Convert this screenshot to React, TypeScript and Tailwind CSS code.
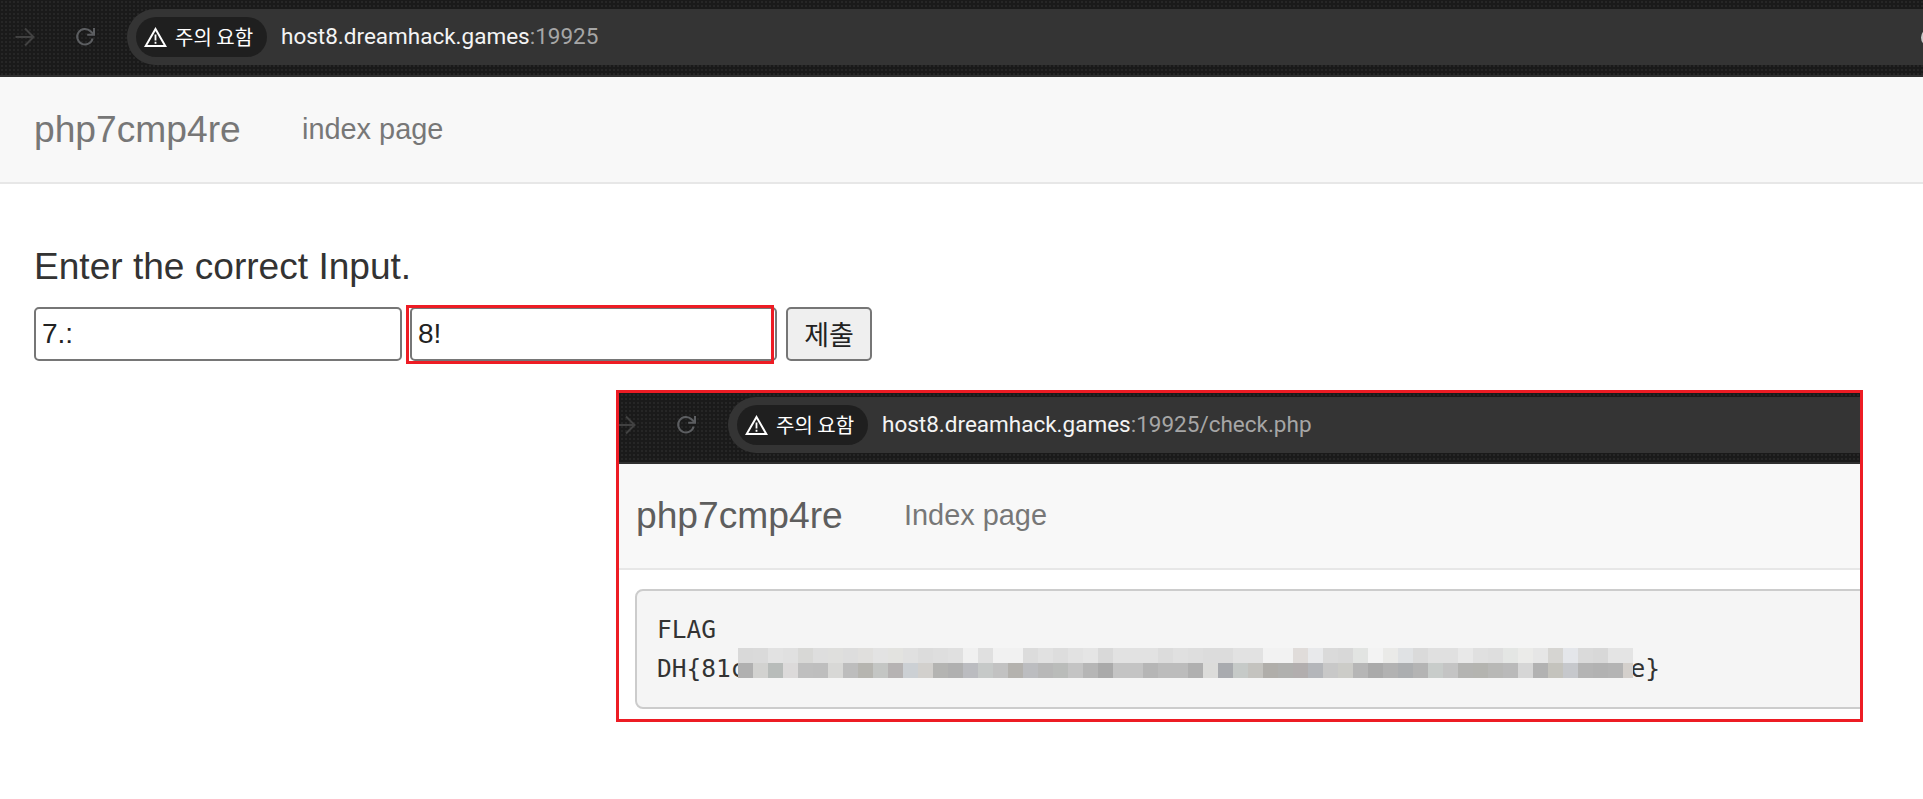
import type { ReactNode } from "react";

const MOSAIC_TOP = [
  "#d9d9d9", "#dadada", "#e2e2e2", "#e0e0e0", "#d8d8d6", "#dedede", "#dfdfdd", "#dddddd", "#e0dfdd", "#e3e3e3",
  "#e3e3e0", "#e0e0e0", "#dcdcdc", "#dedede", "#e0e0e0", "#f0f0f0", "#e0e0e0", "#f1f1f1", "#f1f1f1", "#dcdcdc",
  "#e1e1e1", "#dddddd", "#e2e2e2", "#e5e5e5", "#d9d9d9", "#e2e2e2", "#e2e2e2", "#e2e2e2", "#dcdcdc", "#e0e0e0",
  "#dedede", "#dcdcdc", "#dcdcdc", "#e2e2e2", "#e2e2e2", "#f2f2f2", "#f2f2f2", "#e0dcda", "#e8e9eb", "#dadada",
  "#d8d8d8", "#e2e4e2", "#f3f3f3", "#eaeae8", "#e0e2e4", "#dadada", "#e0e0e0", "#e0e0e0", "#e8e8e8", "#e0e0e0",
  "#dedede", "#e4e6e4", "#ebebe9", "#e6e6e6", "#d6d5d2", "#e4e6ea", "#dadada", "#d8d8d8", "#e4e4e4", "#e4e4e4",
];

const MOSAIC_BOTTOM = [
  "#b0b0b0", "#d2d2d0", "#b8bcba", "#dcdada", "#bfbfbf", "#bebebe", "#d8d8d6", "#bdbdbd", "#b6b5b0", "#c4c6c4",
  "#b6b3b3", "#ccd0d4", "#d2d0cd", "#b4b4b2", "#b0b0b0", "#bbbcc0", "#c6c9c8", "#c2c2c2", "#b4b2ae", "#bcbdc0",
  "#b8b8b8", "#babcba", "#c4c4c4", "#b6b6b6", "#aaaaaa", "#c4c4c4", "#c4c4c4", "#b6b6b6", "#bcbcbc", "#bcbcbc",
  "#b0b0b0", "#dcdcda", "#a9abaf", "#c6cac8", "#c4c3bf", "#b0aeaa", "#b0b0ae", "#b2aeae", "#b4b6ba", "#c8c8c8",
  "#ccccc8", "#b6b6b6", "#aaaaaa", "#b2b2b2", "#acaeb0", "#b4b4b4", "#c8ccca", "#c4c4c4", "#b4b4b2", "#b4b4b0",
  "#b8b8b6", "#bababa", "#d6d6d6", "#b2b2b2", "#c4c3bd", "#c6c8cc", "#b4b4b4", "#b2b2b2", "#b4b4b4", "#d4d0cc",
];

function BackArrow() {
  return (
    <svg viewBox="0 0 20 20" className="h-5 w-5 shrink-0 fill-none stroke-[#414141] stroke-2">
      <path d="M0.5 10H18.5M10 1.5l8.5 8.5-8.5 8.5" />
    </svg>
  );
}

function ReloadIcon() {
  return (
    <svg viewBox="0 0 20 20" className="h-5 w-5 shrink-0 fill-none stroke-[#5c5e61] stroke-2">
      <path d="M17.6 11.5A7.8 7.8 0 1 1 15.6 4.3L18.6 7.2" />
      <path d="M19 1v6.8h-6.8" />
    </svg>
  );
}

function WarningIcon() {
  return (
    <svg viewBox="0 0 23 20" className="h-5 w-[23px] shrink-0 fill-none stroke-white stroke-2">
      <path d="M11.5 2 21.3 19H1.7Z" strokeLinejoin="miter" />
      <path d="M11.5 7.5v6M11.5 14.8v2" strokeWidth="1.8" />
    </svg>
  );
}

function BrowserBar({ path, className }: { path?: string; className: string }) {
  return (
    <div
      className={`border-b-2 border-[#2f2f2f] bg-[#1a1a1a] bg-[radial-gradient(#262626_1px,transparent_1px)] bg-[length:4px_4px] ${className}`}
    >
      <div className="flex h-14 items-center gap-10">
        <BackArrow />
        <ReloadIcon />
        <div className="-ml-2 flex h-14 flex-1 items-center rounded-l-full bg-[#343434] pl-[9px]">
          <div className="flex h-10 w-[131px] items-center gap-[8px] rounded-full bg-[#1f1f1f] pl-[8px] font-['Noto_Sans_CJK_KR',sans-serif] text-[20px] text-white">
            <WarningIcon />
            <span className="-mt-px whitespace-nowrap">주의 요함</span>
          </div>
          <div className="-mt-px ml-[14px] whitespace-nowrap font-['Roboto',sans-serif] text-[22.5px] text-[#f4f4f4]">
            host8.dreamhack.games<span className="text-[#a6a6a6]">:19925{path}</span>
          </div>
        </div>
      </div>
    </div>
  );
}

function Navbar({ brandClass, label, pad }: { brandClass: string; label: string; pad: string }) {
  return (
    <div className={`flex items-center border-b-2 border-[#e7e7e7] bg-[#f8f8f8] ${pad}`}>
      <span className={`w-[268px] text-[37.2px] ${brandClass}`}>php7cmp4re</span>
      <span className="text-[28.9px] text-[#777777]">{label}</span>
    </div>
  );
}

function RedBox({ className, children }: { className: string; children?: ReactNode }) {
  return <div className={`absolute border-[#ed1c24] ${className}`}>{children}</div>;
}

function FlagPanel() {
  return (
    <RedBox className="left-[616px] top-[390px] h-[332px] w-[1247px] overflow-hidden border-[3px] bg-white">
      <BrowserBar path="/check.php" className="-ml-[3px] h-[71px] pt-[4px]" />
      <Navbar brandClass="text-[#5e5e5e]" label="Index page" pad="h-[106px] pl-[17px]" />
      <div className="pl-[16px] pt-[19px]">
        <div className="w-[1400px] rounded-[8px] border-2 border-[#cccccc] bg-[#f5f5f5] px-[20px] py-[19px] font-['DejaVu_Sans_Mono',monospace] text-[24.5px] leading-[39px] text-[#333333]">
          <div>FLAG</div>
          <div className="relative whitespace-pre">
            DH{"{"}81c{"x".repeat(60)}e{"}"}
            <div className="absolute left-[81px] top-[-1px] w-[895px] overflow-hidden">
              <div className="flex w-[900px]">
                {MOSAIC_TOP.map((color, i) => (
                  <div key={i} className="h-[15px] w-[15px]" style={{ backgroundColor: color }} />
                ))}
              </div>
              <div className="flex w-[900px]">
                {MOSAIC_BOTTOM.map((color, i) => (
                  <div key={i} className="h-[15px] w-[15px]" style={{ backgroundColor: color }} />
                ))}
              </div>
            </div>
          </div>
        </div>
      </div>
    </RedBox>
  );
}

export default function App() {
  return (
    <div className="relative h-[799px] overflow-hidden bg-white font-['Liberation_Sans',Arial,sans-serif] text-[#333333]">
      <BrowserBar className="h-[77px] pl-[15px] pt-[9px]" />
      <div className="absolute left-[1921px] top-[28px] h-[19px] w-[19px] rounded-full border-2 border-[#c7c7c7]" />
      <Navbar brandClass="text-[#777777]" label="index page" pad="h-[107px] pl-[34px]" />

      <div className="pl-[34px] pt-[62px]">
        <div className="text-[37.1px] leading-[41px]">Enter the correct Input.</div>
        <form className="mt-[20px] flex gap-[9px] text-[28px]">
          <input
            readOnly
            value="7.:"
            className="h-[54px] w-[368px] rounded-[5px] border-2 border-[#767676] px-[6px] text-[#222222]"
          />
          <div className="relative -ml-px">
            <input
              readOnly
              value="8!"
              className="h-[54px] w-[367px] rounded-[5px] border-2 border-[#767676] px-[6px] text-[#222222]"
            />
            <RedBox className="-left-1 -top-[2px] h-[59px] w-[368px] border-[3px]" />
          </div>
          <button
            type="button"
            className="h-[54px] w-[86px] rounded-[5px] border-2 border-[#767676] bg-[#efefef] font-['Noto_Sans_CJK_KR',sans-serif] text-[27px] text-[#222222]"
          >
            제출
          </button>
        </form>
      </div>

      <FlagPanel />
    </div>
  );
}
